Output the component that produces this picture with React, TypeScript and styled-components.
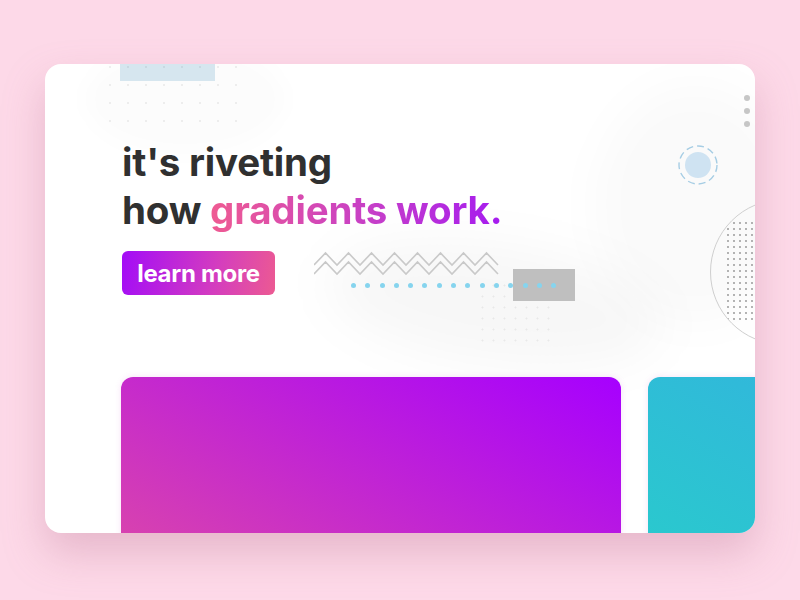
import React from 'react'
import styled, { createGlobalStyle } from 'styled-components'

const GlobalStyle = createGlobalStyle`
  html, body {
    margin: 0;
    padding: 0;
    background: #fdd9e8;
    font-family: Inter, "Noto Sans", sans-serif;
  }
`;

const zigzag = (y: number) => {
  let d = `M0 ${y + 12}`;
  for (let i = 0; i < 8; i++) {
    d += ` L${i * 23 + 11.5} ${y} L${(i + 1) * 23} ${y + 12}`;
  }
  return d;
};

export default function App() {
  const blueDots = Array.from({ length: 15 }, (_, i) => i);
  return (
    <>
      <GlobalStyle />
      <Page>
        <Frame>
          <Decor>
            <TopBlob />
            <MidBlob />
            <RightBlob />
            <TopTab />
            <DotGrid $left={56} $top={-6} $w={144} $h={66} $gap={18} />
            <DotGrid $left={432} $top={216} $w={76} $h={64} $gap={11} />
            <Menu>
              <span />
              <span />
              <span />
            </Menu>
            <Ring viewBox="0 0 44 44">
              <circle cx="22" cy="22" r="19" fill="none" stroke="#a6cde4" strokeWidth="1.4" strokeDasharray="7 4" />
              <circle cx="22" cy="22" r="13" fill="#cfe3f2" />
            </Ring>
            <BigCircle>
              <DotGrid $left={14} $top={20} $w={70} $h={100} $gap={6} $dark />
            </BigCircle>
            <Zigzag viewBox="0 0 186 26">
              <path d={zigzag(2)} fill="none" stroke="#c9c9c9" strokeWidth="1.6" />
              <path d={zigzag(11)} fill="none" stroke="#c9c9c9" strokeWidth="1.6" />
            </Zigzag>
            <GrayBox />
            <BlueDots>
              {blueDots.map((i) => (
                <span key={i} />
              ))}
            </BlueDots>
          </Decor>
          <Hero>
            <Title>
              it's riveting
              <br />
              how <Gradient>gradients work.</Gradient>
            </Title>
            <LearnButton>learn more</LearnButton>
          </Hero>
          <Cards>
            <Card $from="#dc48a8" $to="#a600ff" />
            <Card $from="#29cbcc" $to="#37a9e6" />
          </Cards>
        </Frame>
      </Page>
    </>
  )
}

const Page = styled.div`
  width: 800px;
  height: 600px;
  display: flex;
  justify-content: center;
  align-items: flex-start;
  padding-top: 64px;
  box-sizing: border-box;
  overflow: hidden;
`;

const Frame = styled.div`
  position: relative;
  width: 710px;
  height: 469px;
  background: #fff;
  border-radius: 16px;
  overflow: hidden;
  box-shadow: 0 20px 40px rgba(190, 120, 150, 0.35);
  display: flex;
  flex-direction: column;
`;

const Decor = styled.div`
  position: absolute;
  inset: 0;
  pointer-events: none;
`;

const TopBlob = styled.div`
  position: absolute;
  left: 40px;
  top: -20px;
  width: 200px;
  height: 110px;
  border-radius: 50%;
  background: rgba(0, 0, 0, 0.012);
  filter: blur(10px);
`;

const MidBlob = styled.div`
  position: absolute;
  left: 280px;
  top: 180px;
  width: 340px;
  height: 120px;
  border-radius: 50%;
  background: rgba(0, 0, 0, 0.03);
  filter: blur(24px);
  transform: rotate(8deg);
`;

const RightBlob = styled.div`
  position: absolute;
  right: -40px;
  top: 20px;
  width: 200px;
  height: 240px;
  border-radius: 50%;
  background: rgba(0, 0, 0, 0.02);
  filter: blur(20px);
`;

const TopTab = styled.div`
  position: absolute;
  left: 75px;
  top: 0;
  width: 95px;
  height: 17px;
  background: #d6e6ef;
`;

const DotGrid = styled.div<{ $left: number; $top: number; $w: number; $h: number; $gap: number; $dark?: boolean }>`
  position: absolute;
  left: ${(p) => p.$left}px;
  top: ${(p) => p.$top}px;
  width: ${(p) => p.$w}px;
  height: ${(p) => p.$h}px;
  background-image: radial-gradient(
    circle,
    ${(p) => (p.$dark ? 'rgba(120,120,120,0.55)' : 'rgba(0,0,0,0.06)')} 0.8px,
    transparent 1.2px
  );
  background-size: ${(p) => p.$gap}px ${(p) => p.$gap}px;
`;

const Menu = styled.div`
  position: absolute;
  right: 5px;
  top: 31px;
  display: flex;
  flex-direction: column;
  gap: 7px;

  span {
    width: 6px;
    height: 6px;
    border-radius: 50%;
    background: #c6c6c6;
  }
`;

const Ring = styled.svg`
  position: absolute;
  left: 631px;
  top: 79px;
  width: 44px;
  height: 44px;
`;

const BigCircle = styled.div`
  position: absolute;
  left: 665px;
  top: 135px;
  width: 146px;
  height: 146px;
  border-radius: 50%;
  border: 1px solid #cfcfcf;
  box-sizing: border-box;
  overflow: hidden;
`;

const Zigzag = styled.svg`
  position: absolute;
  left: 269px;
  top: 187px;
  width: 186px;
  height: 26px;
`;

const GrayBox = styled.div`
  position: absolute;
  left: 468px;
  top: 205px;
  width: 62px;
  height: 32px;
  background: #bfbfbf;
`;

const BlueDots = styled.div`
  position: absolute;
  left: 306px;
  top: 219px;
  display: flex;
  gap: 9.3px;

  span {
    width: 5px;
    height: 5px;
    border-radius: 50%;
    background: #86d4ee;
  }
`;

const Hero = styled.div`
  position: relative;
  padding: 74px 0 0 77px;
  display: flex;
  flex-direction: column;
  align-items: flex-start;
`;

const Title = styled.h1`
  margin: 0;
  font-family: Inter, "Noto Sans", sans-serif;
  font-weight: 700;
  font-size: 38.5px;
  line-height: 48px;
  letter-spacing: -0.2px;
  color: #303030;
`;

const Gradient = styled.span`
  background: linear-gradient(90deg, #ef5b92 0%, #c63fc8 55%, #a51bf0 100%);
  -webkit-background-clip: text;
  background-clip: text;
  color: transparent;
`;

const LearnButton = styled.button`
  margin-top: 17px;
  width: 153px;
  height: 44px;
  padding: 0;
  border: none;
  border-radius: 6px;
  background: linear-gradient(100deg, #a30cf7 0%, #d33cc0 60%, #ec5a92 100%);
  color: #fff;
  font-family: Inter, "Noto Sans", sans-serif;
  font-weight: 700;
  font-size: 24px;
  letter-spacing: -0.3px;
  cursor: pointer;
`;

const Cards = styled.div`
  position: relative;
  display: flex;
  gap: 27px;
  padding-left: 76px;
  margin-top: auto;
  height: 156px;
`;

const Card = styled.div<{ $from: string; $to: string }>`
  flex-shrink: 0;
  width: 500px;
  height: 200px;
  border-radius: 12px;
  background: linear-gradient(30deg, ${(p) => p.$from} 0%, ${(p) => p.$to} 100%);
  box-shadow: 0 0 6px rgba(200, 60, 200, 0.15);
`;
